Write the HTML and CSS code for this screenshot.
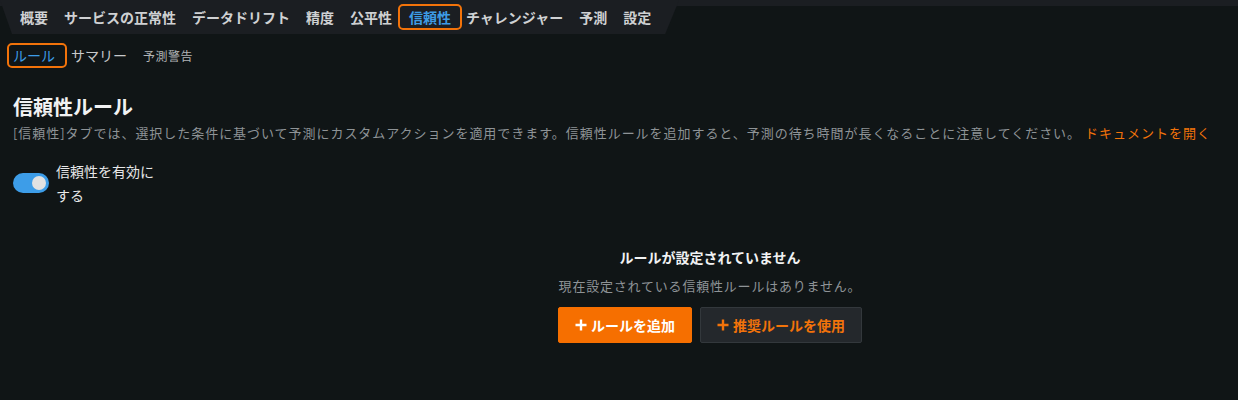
FILE: index.html
```html
<!DOCTYPE html>
<html lang="ja">
<head>
<meta charset="utf-8">
<link rel="stylesheet" href="styles.css">
</head>
<body>
<div class="topbar">
  <nav class="tabs">
    <span class="tab">概要</span>
    <span class="tab">サービスの正常性</span>
    <span class="tab">データドリフト</span>
    <span class="tab">精度</span>
    <span class="tab">公平性</span>
    <span class="tab active">信頼性</span>
    <span class="tab">チャレンジャー</span>
    <span class="tab">予測</span>
    <span class="tab">設定</span>
  </nav>
</div>
<div class="subtabs">
  <span class="subtab active">ルール</span>
  <span class="subtab">サマリー</span>
  <span class="subtab small">予測警告</span>
</div>
<main class="content">
  <h1 class="title">信頼性ルール</h1>
  <p class="desc">[信頼性]タブでは、選択した条件に基づいて予測にカスタムアクションを適用できます。信頼性ルールを追加すると、予測の待ち時間が長くなることに注意してください。 <a class="link">ドキュメントを開く</a></p>
  <div class="row">
    <div class="toggle-col">
      <span class="switch"><span class="knob"></span></span>
      <span class="toggle-label">信頼性を有効にする</span>
    </div>
    <div class="empty">
      <div class="empty-title">ルールが設定されていません</div>
      <div class="empty-sub">現在設定されている信頼性ルールはありません。</div>
      <div class="buttons">
        <button class="btn primary"><svg class="plus" viewBox="0 0 12 12"><path d="M6 0.5v11M0.5 6h11" stroke="currentColor" stroke-width="2.4"/></svg>ルールを追加</button>
        <button class="btn secondary"><svg class="plus" viewBox="0 0 12 12"><path d="M6 0.5v11M0.5 6h11" stroke="currentColor" stroke-width="2.4"/></svg>推奨ルールを使用</button>
      </div>
    </div>
  </div>
</main>
</body>
</html>
```
FILE: styles.css
```css
* { box-sizing: border-box; }
html, body { margin: 0; padding: 0; }
body {
  background: #101516;
  color: #d6d8d9;
  font-family: "Noto Sans CJK JP", "Noto Sans", sans-serif;
  font-size: 14px;
  width: 1238px;
  height: 400px;
  overflow: hidden;
}
.topbar {
  height: 34px;
  background: linear-gradient(#1b1e22 0 6px, transparent 6px);
}
.tabs {
  display: inline-flex;
  align-items: center;
  height: 34px;
  padding: 6px 20px 6px 12px;
  background: #1b1e22;
  clip-path: polygon(0 0, 100% 0, calc(100% - 14px) 100%, 12px 100%);
}
.tab {
  display: block;
  padding: 0 8px;
  height: 22px;
  line-height: 22px;
  font-weight: 700;
  color: #cfd1d3;
  white-space: nowrap;
}
.tab.active {
  color: #3d9ce6;
  outline: 2px solid #f2730a;
  border-radius: 3px;
  margin-right: -2px;
  padding: 0 9px;
}
.subtabs {
  display: flex;
  align-items: center;
  height: 25px;
  margin-top: 9px;
  padding-left: 9px;
}
.subtab {
  line-height: 21px;
  color: #c7c9cb;
  white-space: nowrap;
  margin-right: 16px;
}
.subtab.active {
  color: #3d9ce6;
  outline: 2px solid #f2730a;
  border-radius: 3px;
  padding: 0 10px 0 4px;
  margin-right: 6px;
}
.subtab.small { font-size: 12px; color: #b0b3b5; letter-spacing: 0.5px; }
.content { padding: 0 0 0 13px; }
.title {
  margin: 25px 0 0;
  font-size: 20px;
  line-height: 28px;
  font-weight: 700;
  color: #f1f2f3;
}
.desc {
  margin: 0;
  font-size: 13px;
  letter-spacing: 0.96px;
  line-height: 24px;
  color: #8e9396;
  white-space: nowrap;
}
.link { color: #f2730a; letter-spacing: 1px; }
.row { display: flex; margin-top: 14px; }
.toggle-col {
  width: 169px;
  display: flex;
  align-items: center;
  align-self: flex-start;
}
.switch {
  flex: none;
  width: 36px;
  height: 20px;
  border-radius: 10px;
  background: #3d9de8;
  position: relative;
  margin-right: 7px;
}
.knob {
  position: absolute;
  right: 3px;
  top: 3px;
  width: 14px;
  height: 14px;
  border-radius: 50%;
  background: #e2e2e2;
}
.toggle-label {
  width: 100px;
  line-height: 24px;
  color: #e6e7e8;
}
.empty {
  flex: 1;
  display: flex;
  flex-direction: column;
  align-items: center;
  padding-top: 88px;
}
.empty-title {
  font-weight: 700;
  color: #f1f2f3;
  line-height: 20px;
}
.empty-sub {
  margin-top: 9px;
  font-size: 13px;
  letter-spacing: 0.8px;
  line-height: 20px;
  color: #8e9396;
}
.buttons { display: flex; gap: 8px; margin-top: 11px; }
.btn {
  display: flex;
  align-items: center;
  height: 36px;
  padding: 0 16px;
  border-radius: 2px;
  font-family: inherit;
  font-size: 14px;
  font-weight: 700;
  cursor: pointer;
}
.btn.primary { background: #f66f00; border: 1px solid #f66f00; color: #ffffff; }
.btn.secondary { background: #24282c; border: 1px solid #33383c; color: #f2730a; }
.plus { width: 12px; height: 12px; margin-right: 4px; }
```
